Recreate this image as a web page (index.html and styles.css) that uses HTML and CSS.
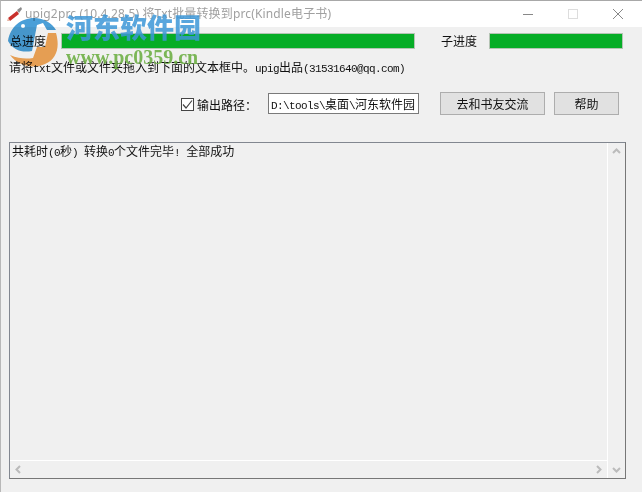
FILE: index.html
```html
<!DOCTYPE html>
<html>
    <head>
        <meta charset="UTF-8">
        <title>upig2prc</title>
        <link rel="stylesheet" href="styles.css">
    </head>
    <body>
        <div class="window">
            <div class="titlebar">
                <svg class="app-icon" width="16" height="16" viewBox="0 0 16 16">
                    <path d="M1 12 L10 5 L12 8 L3 15 Z" fill="#c8302c"/>
                    <path d="M10 4 L14 1 L15 3 L12 7 Z" fill="#8a8a8a"/>
                    <path d="M1 12 L3 15 L0 15 Z" fill="#e8b8a8"/>
                </svg>
                <span class="title">upig2prc (10.4.28.5) 将Txt批量转换到prc(Kindle电子书)</span>
                <div class="caption-buttons">
                    <svg width="12" height="12" viewBox="0 0 12 12"><path d="M1 6.5 H11" stroke="#888" fill="none"/></svg>
                    <svg width="12" height="12" viewBox="0 0 12 12"><rect x="1.5" y="1.5" width="9" height="9" stroke="#ddd" fill="none"/></svg>
                    <svg width="12" height="12" viewBox="0 0 12 12"><path d="M1 1 L11 11 M11 1 L1 11" stroke="#888" fill="none"/></svg>
                </div>
            </div>
            <div class="content">
                <div class="progress-row">
                    <label class="total-label">总进度</label>
                    <div class="bar total-bar"></div>
                    <label class="sub-label">子进度</label>
                    <div class="bar sub-bar"></div>
                </div>
                <p class="hint">请将<span class="mono">txt</span>文件或文件夹拖入到下面的文本框中。<span class="mono">upig</span>出品<span class="mono">(31531640@qq.com)</span></p>
                <div class="options-row">
                    <span class="checkbox">
                        <svg width="11" height="11" viewBox="0 0 11 11"><path d="M1 5.5 L4 9 L10 1.5" stroke="#444" stroke-width="1.2" fill="none"/></svg>
                    </span>
                    <label class="path-label">输出路径：</label>
                    <div class="path-input"><span class="mono">D:\tools\</span>桌面<span class="mono">\</span>河东软件园</div>
                    <button class="btn btn-wide">去和书友交流</button>
                    <button class="btn btn-help">帮助</button>
                </div>
                <div class="log">
                    <div class="log-main">
                        <div class="log-text">共耗时<span class="mono">(0</span>秒<span class="mono">) </span>转换<span class="mono">0</span>个文件完毕<span class="mono">! </span>全部成功</div>
                        <div class="hscroll">
                            <svg width="9" height="9" viewBox="0 0 9 9"><path d="M6 1 L2.5 4.5 L6 8" stroke="#bbb" stroke-width="2" fill="none"/></svg>
                            <svg width="9" height="9" viewBox="0 0 9 9"><path d="M3 1 L6.5 4.5 L3 8" stroke="#bbb" stroke-width="2" fill="none"/></svg>
                        </div>
                    </div>
                    <div class="vscroll">
                        <svg width="9" height="9" viewBox="0 0 9 9"><path d="M1 6 L4.5 2.5 L8 6" stroke="#bbb" stroke-width="2" fill="none"/></svg>
                        <svg width="9" height="9" viewBox="0 0 9 9"><path d="M1 3 L4.5 6.5 L8 3" stroke="#bbb" stroke-width="2" fill="none"/></svg>
                    </div>
                </div>
            </div>
            <div class="watermark">
                <svg class="wm-logo" width="56" height="52" viewBox="0 0 56 52">
                    <path d="M1 24 C3 10 14 1 27 1 C37 1 45 6 49 13 L40 13 L36 6 L30 8 L25 34 C15 36 6 33 1 24 Z" fill="#4a9fd8"/>
                    <path d="M49 16 C53 30 50 42 38 47 C28 52 12 50 3 38 C12 42 20 42 26 41 L30 30 L38 30 L41 16 Z" fill="#f4a858"/>
                    <circle cx="16" cy="9" r="2" fill="#fff"/>
                </svg>
                <div class="wm-name">河东软件园</div>
                <div class="wm-url">www.pc0359.cn</div>
            </div>
        </div>
    </body>
</html>
```

FILE: styles.css
```css
html, body {
    margin: 0;
    padding: 0;
}

body {
    width: 642px;
    height: 492px;
    overflow: hidden;
    font-family: "Noto Sans CJK SC", "Liberation Sans", sans-serif;
    font-size: 12px;
    color: #111;
}

.window {
    position: relative;
    width: 642px;
    height: 492px;
    box-sizing: border-box;
    background: #f0f0f0;
    border-top: 1px solid #a8a8a8;
    border-left: 1px solid #b8b8b8;
    display: flex;
    flex-direction: column;
}

/* latin text in the old bitmap font is 6px a character */
.mono {
    font-family: "Liberation Mono", monospace;
    font-size: 11px;
    letter-spacing: -0.6px;
    white-space: pre;
}

/* title bar */
.titlebar {
    height: 26px;
    background: #fff;
    display: flex;
    align-items: center;
    padding-left: 6px;
    flex: none;
}

.title {
    margin: -2px 0 0 2px;
    color: #a0a0a0;
    font-family: "Noto Sans", "Noto Sans CJK SC", sans-serif;
    font-size: 12px;
    letter-spacing: 0.15px;
    white-space: nowrap;
}

.caption-buttons {
    margin-left: auto;
    margin-right: 18px;
    display: flex;
    gap: 33px;
}

.content {
    flex: 1;
    display: flex;
    flex-direction: column;
    padding: 5px 16px 13px 8px;
    min-height: 0;
}

/* progress */
.progress-row {
    display: flex;
    align-items: center;
    height: 17px;
}

.total-label {
    width: 52px;
    padding-left: 1px;
    box-sizing: border-box;
}

.sub-label {
    width: 74px;
    padding-left: 26px;
    box-sizing: border-box;
}

.bar {
    height: 16px;
    box-sizing: border-box;
    background: #06ad26;
    border: 1px solid #b4c4b4;
}

.total-bar {
    width: 354px;
}

.sub-bar {
    width: 134px;
}

.hint {
    margin: 9px 0 0 0;
    height: 18px;
    line-height: 18px;
    white-space: nowrap;
}

/* output path row */
.options-row {
    display: flex;
    align-items: center;
    height: 24px;
    margin-top: 15px;
    padding-left: 172px;
}

.checkbox {
    width: 13px;
    height: 13px;
    margin-top: 2px;
    box-sizing: border-box;
    border: 1px solid #444;
    background: #fff;
    display: flex;
    align-items: center;
    justify-content: center;
}

.path-label {
    margin-left: 3px;
    margin-top: 3px;
    width: 71px;
}

.path-input {
    width: 151px;
    height: 21px;
    box-sizing: border-box;
    border: 1px solid #7a7a7a;
    background: #fff;
    line-height: 19px;
    padding-left: 2px;
    white-space: nowrap;
    overflow: hidden;
}

.btn {
    height: 23px;
    box-sizing: border-box;
    border: 1px solid #adadad;
    background: #e1e1e1;
    font-family: inherit;
    font-size: 12px;
    color: #111;
    padding: 0;
}

.btn-wide {
    width: 105px;
    margin-left: 21px;
}

.btn-help {
    width: 65px;
    margin-left: 9px;
}

/* log box */
.log {
    margin-top: 27px;
    height: 337px;
    box-sizing: border-box;
    border: 1px solid #828790;
    border-right-color: #777;
    border-bottom-color: #777;
    display: flex;
    background: #f0f0f0;
}

.log-main {
    flex: 1;
    display: flex;
    flex-direction: column;
    border-right: 1px solid #fff;
}

.log-text {
    flex: 1;
    padding: 0 2px;
    line-height: 15px;
    border-bottom: 1px solid #fff;
}

.hscroll {
    height: 17px;
    display: flex;
    justify-content: space-between;
    align-items: center;
    padding: 0 4px;
}

.vscroll {
    width: 17px;
    display: flex;
    flex-direction: column;
    justify-content: space-between;
    align-items: center;
    padding: 4px 0;
    box-sizing: border-box;
}

/* watermark over the top left corner */
.watermark {
    position: absolute;
    left: 0;
    top: 0;
    width: 220px;
    height: 70px;
    pointer-events: none;
}

.wm-logo {
    position: absolute;
    left: 6px;
    top: 16px;
    mix-blend-mode: multiply;
}

.wm-name {
    position: absolute;
    left: 65px;
    top: 10px;
    font-family: "Noto Sans CJK SC", sans-serif;
    font-weight: 900;
    font-size: 27px;
    line-height: 32px;
    color: rgba(60, 150, 215, 0.85);
}

.wm-url {
    position: absolute;
    left: 65px;
    top: 45px;
    font-family: "Liberation Serif", serif;
    font-weight: bold;
    font-size: 20px;
    line-height: 22px;
    color: rgba(110, 175, 70, 0.9);
}
```
